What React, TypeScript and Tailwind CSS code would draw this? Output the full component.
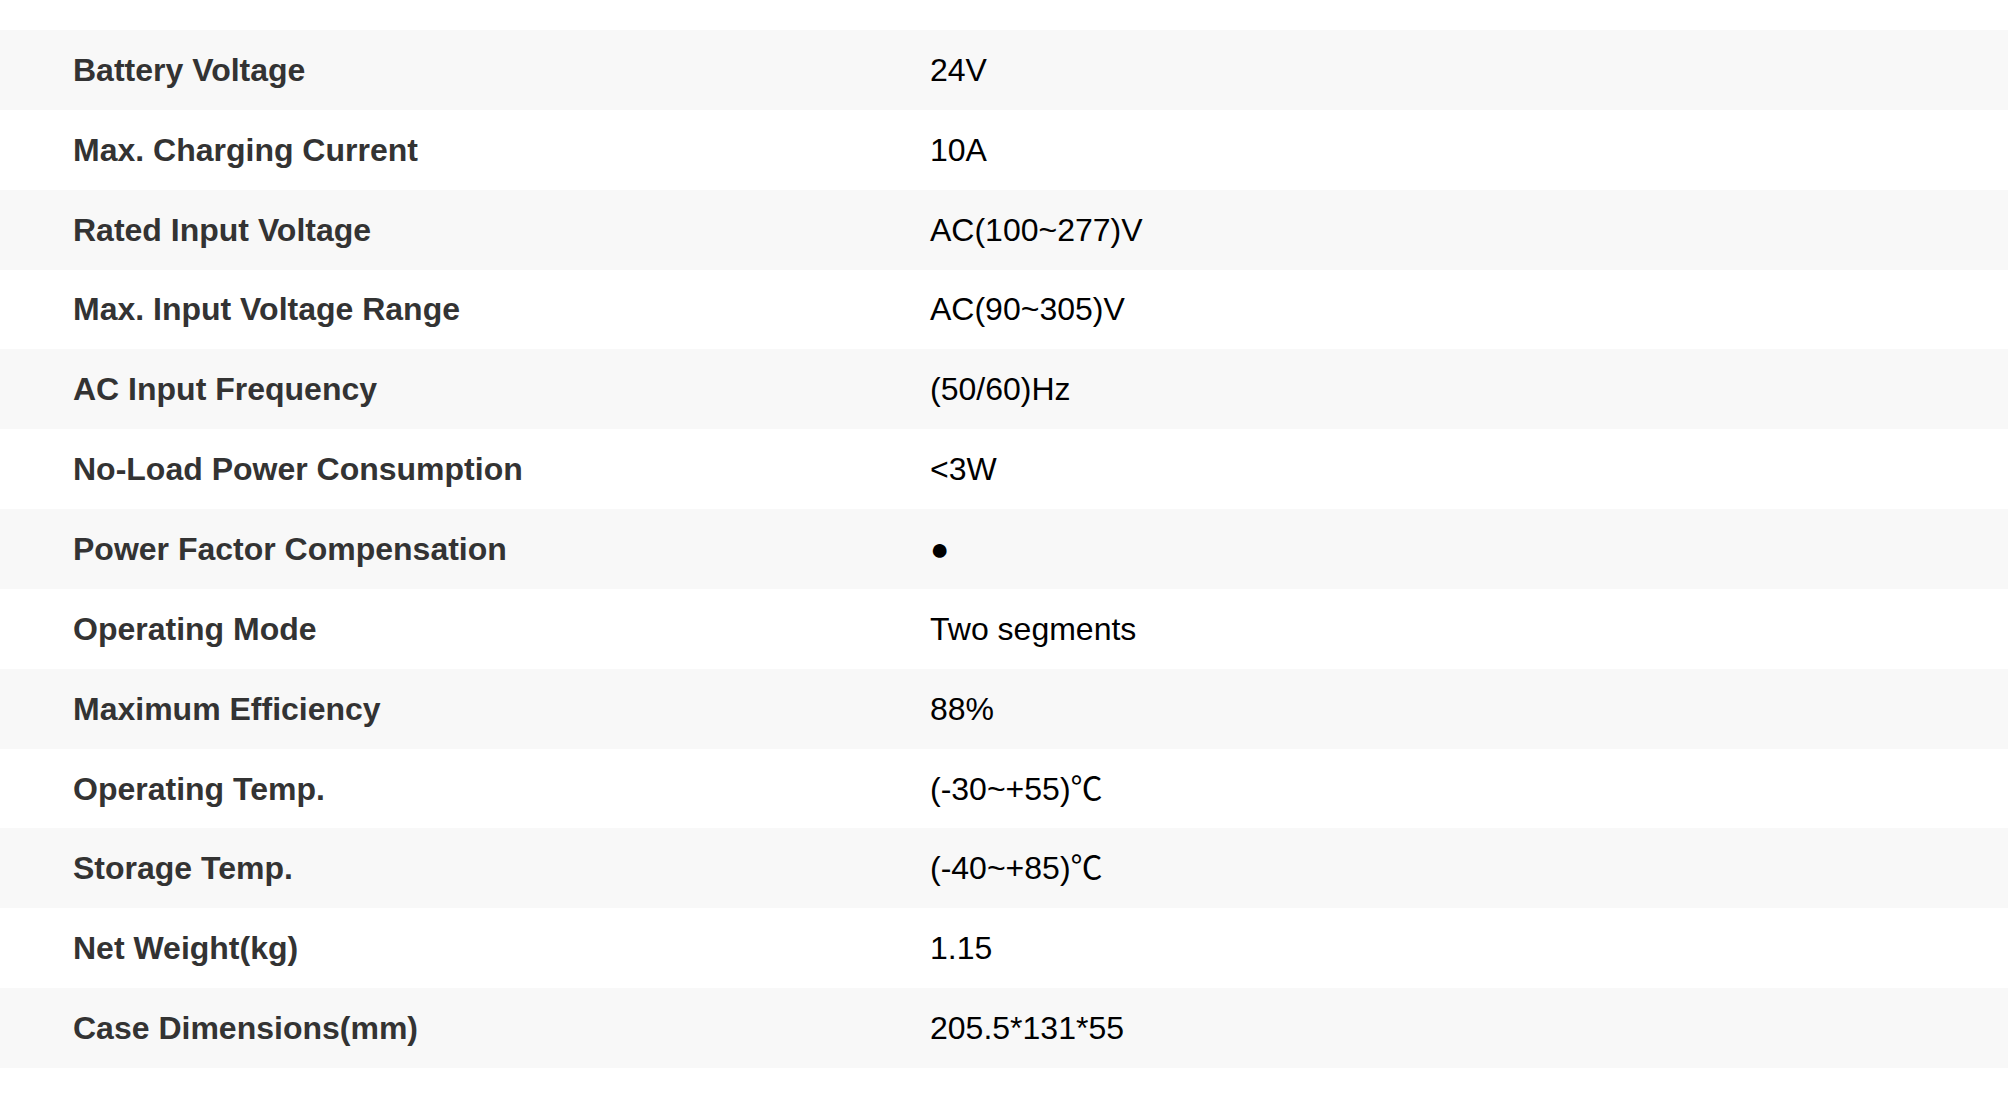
const SPECS: [string, string][] = [
  ["Battery Voltage", "24V"],
  ["Max. Charging Current", "10A"],
  ["Rated Input Voltage", "AC(100~277)V"],
  ["Max. Input Voltage Range", "AC(90~305)V"],
  ["AC Input Frequency", "(50/60)Hz"],
  ["No-Load Power Consumption", "<3W"],
  ["Power Factor Compensation", "●"],
  ["Operating Mode", "Two segments"],
  ["Maximum Efficiency", "88%"],
  ["Operating Temp.", "(-30~+55)℃"],
  ["Storage Temp.", "(-40~+85)℃"],
  ["Net Weight(kg)", "1.15"],
  ["Case Dimensions(mm)", "205.5*131*55"],
];

export default function App() {
  return (
    <div
      className="min-h-[1094px] w-full bg-white pt-[30px]"
      style={{ fontFamily: '"Liberation Sans", Arial, "Noto Sans CJK SC", sans-serif' }}
    >
      <div className="flex flex-col">
        {SPECS.map(([label, value], i) => (
          <div
            key={label}
            className={`flex h-[79.85px] items-center text-[32px] ${
              i % 2 === 0 ? "bg-[#f8f8f8]" : "bg-white"
            }`}
          >
            <div className="w-[930px] shrink-0 pl-[73px] font-bold text-[#333333]">
              {label}
            </div>
            <div className="text-black">{value}</div>
          </div>
        ))}
      </div>
    </div>
  );
}
